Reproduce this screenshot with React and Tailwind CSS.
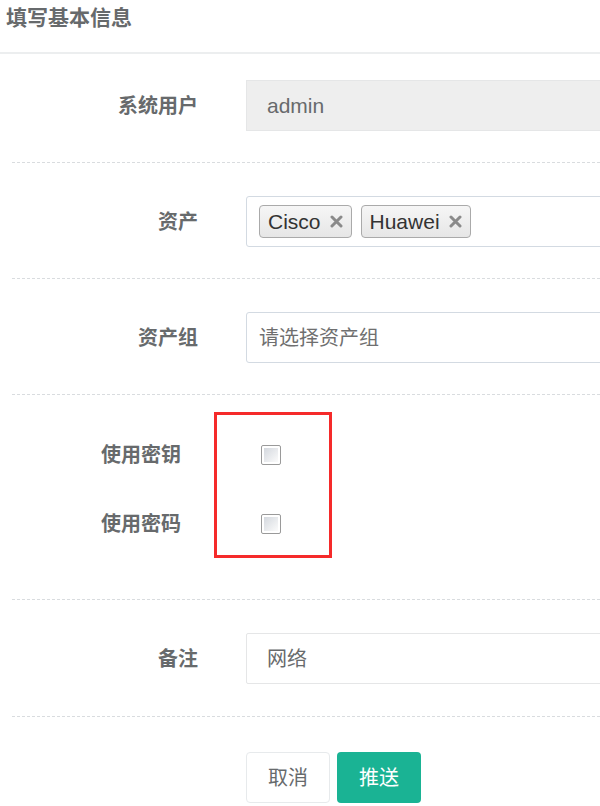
import React from 'react';

const Tag = ({ label }) => (
  <span className="flex items-center h-[33px] px-[8px] gap-[9px] rounded-[4px] border border-[#aaaaaa] bg-gradient-to-b from-[#f6f6f6] to-[#e6e6e6] text-[21px] text-[#333333]">
    {label}
    <svg width="13" height="13" viewBox="0 0 13 13" className="text-[#8a8a8a]">
      <path d="M2 2 L11 11 M11 2 L2 11" stroke="currentColor" strokeWidth="3" strokeLinecap="round" />
    </svg>
  </span>
);

const Checkbox = () => (
  <div className="w-[20px] h-[20px] border border-[#9a9a9a] rounded-[2px] bg-white p-[2px]">
    <div className="w-full h-full bg-gradient-to-br from-[#d4d8de] to-[#fbfbfb]" />
  </div>
);

const Divider = () => <div className="ml-[12px] border-t border-dashed border-[#d9dcdf]" />;

const Row = ({ label, children }) => (
  <div className="flex items-center h-[51px]">
    <div className="w-[198px] shrink-0 text-right text-[20px] font-bold text-[#676a6c]">{label}</div>
    <div className="ml-[48px] w-[400px] h-full shrink-0">{children}</div>
  </div>
);

export default function App() {
  return (
    <div className="relative w-[600px] h-[806px] overflow-hidden bg-white font-['Liberation_Sans','Noto_Sans_CJK_SC',sans-serif] text-[#676a6c]">
      {/* header */}
      <div className="h-[52px] pl-[6px] pt-[4px] text-[21px] font-bold leading-[28px]">填写基本信息</div>
      <div className="h-[2px] bg-[#eceeef]" />

      <div className="pt-[26px]">
        <Row label="系统用户">
          <div className="h-full flex items-center pl-[20px] bg-[#eeeeee] border border-[#e5e6e7] text-[21px]">admin</div>
        </Row>
        <div className="mt-[31px] mb-[33px]"><Divider /></div>

        <Row label="资产">
          <div className="h-full flex items-center gap-[9px] pl-[12px] border border-[#d3dae2] rounded-[3px]">
            <Tag label="Cisco" />
            <Tag label="Huawei" />
          </div>
        </Row>
        <div className="mt-[31px] mb-[33px]"><Divider /></div>

        <Row label="资产组">
          <div className="h-full flex items-center pl-[12px] border border-[#d3dae2] rounded-[3px] text-[20px] text-[#6f6f6f]">请选择资产组</div>
        </Row>
        <div className="mt-[31px]"><Divider /></div>

        {/* key / password switches */}
        <div className="relative pt-[45px] pb-[60px]">
          <div className="flex flex-col gap-[39px] pl-[101px]">
            <div className="flex items-center h-[30px]">
              <div className="w-[160px] text-[20px] font-bold">使用密钥</div>
              <Checkbox />
            </div>
            <div className="flex items-center h-[30px]">
              <div className="w-[160px] text-[20px] font-bold">使用密码</div>
              <Checkbox />
            </div>
          </div>
          <div className="absolute left-[214px] top-[17px] w-[118px] h-[146px] border-[3px] border-[#f52a2a]" />
        </div>
        <div className="mb-[33px]"><Divider /></div>

        <Row label="备注">
          <div className="h-full flex items-center pl-[20px] border border-[#e5e6e7] rounded-[2px] text-[20px]">网络</div>
        </Row>
        <div className="mt-[32px] mb-[35px]"><Divider /></div>

        <div className="flex gap-[7px] pl-[246px]">
          <button className="w-[84px] h-[51px] rounded-[4px] border border-[#e7eaec] bg-white text-[20px] text-[#676a6c]">取消</button>
          <button className="w-[84px] h-[51px] rounded-[4px] bg-[#1ab394] text-[20px] text-white">推送</button>
        </div>
      </div>
    </div>
  );
}
